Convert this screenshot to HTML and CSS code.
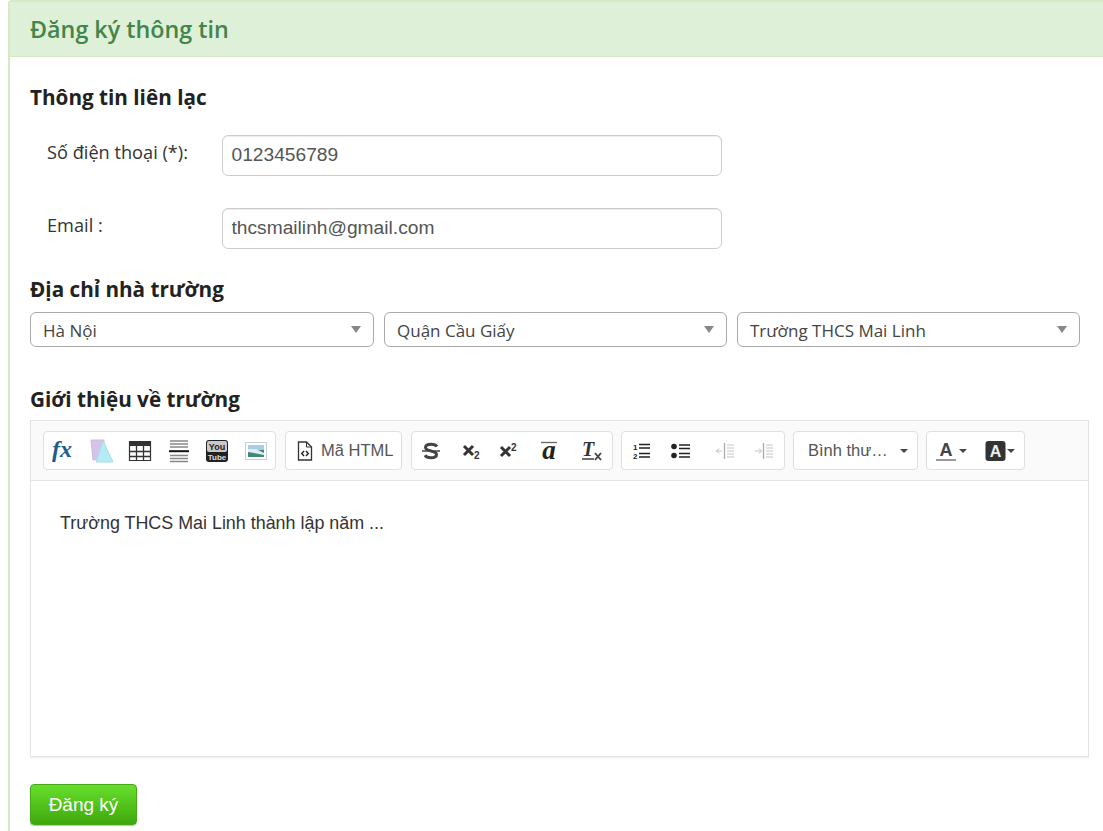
FILE: index.html
```html
<!DOCTYPE html>
<html lang="vi">

<head>
	<title>Đăng ký thông tin</title>
	<meta charset="utf-8">
	<link rel="stylesheet" href="styles.css">
</head>

<body>
	<div class="panel">
		<div class="panel-heading">Đăng ký thông tin</div>
		<div class="panel-body">
			<h3 class="section-title first">Thông tin liên lạc</h3>
			<div class="form-row">
				<label class="form-label">Số điện thoại (*):</label>
				<input class="form-input" type="text" value="0123456789">
			</div>
			<div class="form-row last">
				<label class="form-label">Email :</label>
				<input class="form-input" type="text" value="thcsmailinh@gmail.com">
			</div>

			<h3 class="section-title">Địa chỉ nhà trường</h3>
			<div class="select-row">
				<div class="select-box">Hà Nội<span class="select-arrow"></span></div>
				<div class="select-box">Quận Cầu Giấy<span class="select-arrow"></span></div>
				<div class="select-box">Trường THCS Mai Linh<span class="select-arrow"></span></div>
			</div>

			<h3 class="section-title intro">Giới thiệu về trường</h3>
			<div class="editor">
				<div class="toolbar">
					<div class="btn-group spaced">
						<button class="tool">
							<svg width="28" height="30" viewBox="0 0 28 30"><text x="3" y="21" class="fx-text">fx</text></svg>
						</button>
						<button class="tool">
							<svg width="24" height="24" viewBox="0 0 24 24">
								<path d="M1 1h13v19l-11 1z" fill="#d6c2ec" stroke="#c9c0d4" />
								<path d="M13 2l10 21H6z" fill="#b4ecf6" stroke="#a8dce8" />
							</svg>
						</button>
						<button class="tool">
							<svg width="24" height="22" viewBox="0 0 24 22">
								<path d="M1.500 1.500h21v19h-21z" fill="#fff" stroke="#333" stroke-width="1.200" />
								<path d="M1 1h22v5H1z" fill="#333" />
								<path d="M8.500 6v15M15.500 6v15M1 11.500h22M1 16.500h22" stroke="#333" stroke-width="1.300" />
							</svg>
						</button>
						<button class="tool">
							<svg width="22" height="24" viewBox="0 0 22 24">
								<path d="M2 2h18M2 5h18M2 8h18M2 16.500h18M2 19.500h18M2 22.500h18" stroke="#888" stroke-width="1.300" />
								<path d="M1 12.200h20" stroke="#111" stroke-width="2" />
							</svg>
						</button>
						<button class="tool">
							<svg width="24" height="24" viewBox="0 0 24 24">
								<rect x="1" y="1" width="22" height="22" rx="3" fill="#222" />
								<rect x="2" y="2" width="20" height="11" rx="2" fill="#c9c9c9" />
								<text x="12" y="11" class="yt-top">You</text>
								<text x="12" y="21" class="yt-bottom">Tube</text>
							</svg>
						</button>
						<button class="tool">
							<svg width="24" height="20" viewBox="0 0 24 20">
								<rect x="1.500" y="1.500" width="21" height="17" fill="#fff" stroke="#c5ced2" />
								<rect x="4" y="4" width="16" height="6" fill="#a9cbe6" />
								<path d="M4 9h16v7H4z" fill="#3f8a73" />
								<path d="M4 8h8l8 4v2l-10-2-6-1z" fill="#dfeef6" />
							</svg>
						</button>
					</div>
					<div class="btn-group spaced">
						<button class="tool wide">
							<svg width="16" height="20" viewBox="0 0 16 20">
								<path d="M1.500 1h8l5 5v13h-13z" fill="#fff" stroke="#333" stroke-width="1.300" />
								<path d="M9.500 1v5h5" fill="none" stroke="#333" />
								<path d="M7 10L4.700 12.500 7 15M9 10l2.300 2.500L9 15" fill="none" stroke="#222" stroke-width="1.400" />
							</svg>
							<span>Mã HTML</span>
						</button>
					</div>
					<div class="btn-group group-format">
						<button class="tool">
							<svg width="22" height="18" viewBox="0 0 22 18">
								<path d="M16 4.500C15 2.800 13 2.200 10 2.200c-3 0-5.500 1-5.500 3.300 0 4.500 11 2.500 11 7 0 2.300-2.500 3.300-5.500 3.300-3 0-5-.8-6-2.500" fill="none" stroke="#444" stroke-width="3" />
								<path d="M1 9h18" stroke="#444" stroke-width="1.500" />
							</svg>
						</button>
						<button class="tool">
							<svg width="20" height="18" viewBox="0 0 20 18">
								<path d="M2 4l9 9M11 4l-9 9" stroke="#333" stroke-width="3" />
								<text x="12" y="16.500" class="script-num">2</text>
							</svg>
						</button>
						<button class="tool">
							<svg width="26" height="18" viewBox="0 0 26 18">
								<path d="M2 5l9 9M11 5l-9 9" stroke="#333" stroke-width="3" />
								<text x="12" y="8.500" class="script-num">2</text>
							</svg>
						</button>
						<button class="tool">
							<svg width="26" height="30" viewBox="0 0 26 30">
								<path d="M2 6.500h16" stroke="#666" stroke-width="1.300" />
								<text x="10" y="23" class="over-a">a</text>
							</svg>
						</button>
						<button class="tool">
							<svg width="22" height="26" viewBox="0 0 22 26">
								<text x="1" y="18" class="clear-t">T</text>
								<path d="M1 21h12" stroke="#333" stroke-width="1.400" />
								<path d="M14 15l6 7M20 15l-6 7" stroke="#444" stroke-width="1.900" />
							</svg>
						</button>
					</div>
					<div class="btn-group group-list">
						<button class="tool">
							<svg width="20" height="18" viewBox="0 0 20 18">
								<path d="M7 2.500h11M7 6h11M7 11.500h11M7 15h11" stroke="#222" stroke-width="1.700" />
								<text x="1" y="8" class="list-num">1</text>
								<text x="1" y="17" class="list-num">2</text>
							</svg>
						</button>
						<button class="tool">
							<svg width="24" height="18" viewBox="0 0 24 18">
								<path d="M8 3h11M8 6.500h11M8 11.500h11M8 15h11" stroke="#222" stroke-width="1.700" />
								<circle cx="3" cy="4.500" r="2.800" fill="#222" />
								<circle cx="3" cy="13.500" r="2.800" fill="#222" />
							</svg>
						</button>
						<button class="tool">
							<svg width="24" height="18" viewBox="-4 0 24 18">
								<path d="M9.500 1v16" stroke="#aaa" stroke-width="1.300" />
								<path d="M12 3h7M12 6h7M12 9h7M12 12h7M12 15h7M1 9h6" stroke="#c4c4c4" />
								<path d="M4 6.500L1.500 9 4 11.500" fill="none" stroke="#bbb" />
							</svg>
						</button>
						<button class="tool">
							<svg width="20" height="18" viewBox="0 0 20 18">
								<path d="M9.500 1v16" stroke="#aaa" stroke-width="1.300" />
								<path d="M12 3h7M12 6h7M12 9h7M12 12h7M12 15h7M1 9h6" stroke="#c4c4c4" />
								<path d="M5 6.500L7.500 9 5 11.500" fill="none" stroke="#bbb" />
							</svg>
						</button>
					</div>
					<div class="btn-group">
						<button class="tool style-select"><span class="style-name">Bình thư…</span><span class="caret"></span></button>
					</div>
					<div class="btn-group">
						<button class="tool color">
							<svg width="22" height="24" viewBox="0 0 22 24">
								<text x="10" y="17" class="color-a">A</text>
								<path d="M0 21h20" stroke="#999" stroke-width="2" />
							</svg>
							<span class="caret small"></span>
						</button>
						<button class="tool color">
							<svg width="21" height="22" viewBox="0 0 21 22">
								<rect x="0.500" y="1" width="20" height="20" rx="3" fill="#333" />
								<text x="10.500" y="16.500" class="color-a light">A</text>
							</svg>
							<span class="caret small"></span>
						</button>
					</div>
				</div>
				<div class="editor-content">Trường THCS Mai Linh thành lập năm ...</div>
			</div>

			<button class="submit-btn">Đăng ký</button>
		</div>
	</div>
</body>

</html>
```

FILE: styles.css
```css
* {
	box-sizing: border-box;
}

body {
	margin: 0;
	background: #fff;
	overflow: hidden;
	font-family: "Open Sans", "Noto Sans", sans-serif;
	color: #333;
}

.panel {
	margin-left: 8px;
	height: 831px;
	border: 2px solid #d6e9c6;
	border-right: 0;
	border-bottom: 0;
	border-top-left-radius: 4px;
	overflow: hidden;
}

.panel-heading {
	height: 55px;
	padding-left: 20px;
	background: #dff0d8;
	border-bottom: 1px solid #d6e9c6;
	color: #43854a;
	font-size: 23.300px;
	font-weight: 600;
	line-height: 55px;
}

.panel-body {
	padding: 0 14px 0 20px;
}

.section-title {
	margin: 0;
	font-size: 20.700px;
	font-weight: 700;
	line-height: 28px;
	color: #222;
}

.section-title.first {
	padding-top: 26px;
	height: 78px;
}

.section-title.intro {
	margin-top: 38px;
}

.form-row {
	display: flex;
	height: 41px;
	margin-bottom: 32px;
	padding-left: 17px;
}

.form-row.last {
	margin-bottom: 26px;
}

.form-label {
	width: 175px;
	padding-top: 6px;
	font-size: 18.200px;
	line-height: 22px;
}

.form-input {
	width: 500px;
	height: 41px;
	padding: 0 8.500px 2px;
	border: 1px solid #ccc;
	border-radius: 6px;
	box-shadow: inset 0 1px 1px rgba(0, 0, 0, .075);
	font-family: "Liberation Sans", sans-serif;
	font-size: 19.200px;
	color: #555;
}

.select-row {
	display: grid;
	grid-template-columns: 344px 343px 343px;
	gap: 10px;
	margin-top: 9px;
}

.select-box {
	position: relative;
	height: 35px;
	padding-left: 12px;
	border: 1px solid #aaa;
	border-radius: 6px;
	font-size: 17px;
	line-height: 35px;
	color: #444;
}

.select-arrow {
	position: absolute;
	top: 13px;
	right: 12px;
	border-style: solid;
	border-width: 7px 5px 0;
	border-color: #888 transparent transparent;
}

.editor {
	width: 1059px;
	height: 337px;
	margin-top: 7px;
	border: 1px solid #e3e3e3;
	box-shadow: 0 1px 1px rgba(0, 0, 0, .06);
}

.toolbar {
	display: flex;
	gap: 8px;
	height: 60px;
	padding: 10px 12px;
	background: #fafafa;
	border-bottom: 1px solid #e3e3e3;
}

.btn-group {
	display: flex;
	height: 39px;
	background: #fff;
	border: 1px solid #e0e0e0;
	border-radius: 4px;
}

.btn-group.spaced {
	margin-right: 1px;
}

.tool {
	display: flex;
	align-items: center;
	justify-content: center;
	width: 38.500px;
	height: 37px;
	padding: 0;
	background: none;
	border: 0;
	font-family: "Liberation Sans", sans-serif;
	font-size: 16.500px;
	color: #555;
}

.group-format .tool {
	width: 40px;
}

.group-list .tool {
	width: 40.500px;
}

.tool.wide {
	width: 115px;
	gap: 8px;
	justify-content: flex-start;
	padding-left: 11px;
}

.tool.style-select {
	width: 123px;
	justify-content: flex-start;
	padding-left: 14px;
}

.tool.color {
	width: 48.500px;
}

.style-name {
	width: 90px;
	text-align: left;
	white-space: nowrap;
}

.caret {
	border-style: solid;
	border-width: 4px 4px 0;
	border-color: #444 transparent transparent;
	margin-left: 2px;
}

.caret.small {
	margin-left: 1px;
}

.editor-content {
	padding: 30px 29px;
	font-family: "Liberation Sans", sans-serif;
	font-size: 17.900px;
	line-height: 24px;
	color: #333;
}

.submit-btn {
	display: block;
	width: 107px;
	height: 41px;
	margin-top: 27px;
	padding: 0;
	background: linear-gradient(#67df2c, #3fa80c);
	border: 1px solid #45a817;
	border-radius: 4px;
	box-shadow: 0 1px 1px rgba(0, 0, 0, .25);
	font-family: "Liberation Sans", sans-serif;
	font-size: 19px;
	color: #fff;
}

.fx-text {
	font-family: "Liberation Serif", serif;
	font-size: 24px;
	font-weight: 700;
	font-style: italic;
	fill: #1d5c8c;
}

.yt-top,
.yt-bottom {
	font-family: "Liberation Sans", sans-serif;
	font-size: 8px;
	font-weight: 700;
	text-anchor: middle;
}

.yt-top {
	font-size: 9px;
	fill: #222;
}

.yt-bottom {
	fill: #ddd;
}

.script-num {
	font-family: "Liberation Sans", sans-serif;
	font-size: 10px;
	font-weight: 700;
	fill: #333;
}

.over-a {
	font-family: "Liberation Serif", serif;
	font-size: 27px;
	font-weight: 700;
	font-style: italic;
	text-anchor: middle;
	fill: #222;
}

.clear-t {
	font-family: "Liberation Serif", serif;
	font-size: 20px;
	font-weight: 700;
	font-style: italic;
	fill: #333;
}

.list-num {
	font-family: "Liberation Sans", sans-serif;
	font-size: 8px;
	font-weight: 700;
	fill: #222;
}

.color-a {
	font-family: "Liberation Sans", sans-serif;
	font-size: 18px;
	font-weight: 700;
	text-anchor: middle;
	fill: #444;
}

.color-a.light {
	font-size: 16px;
	fill: #eee;
}
```
